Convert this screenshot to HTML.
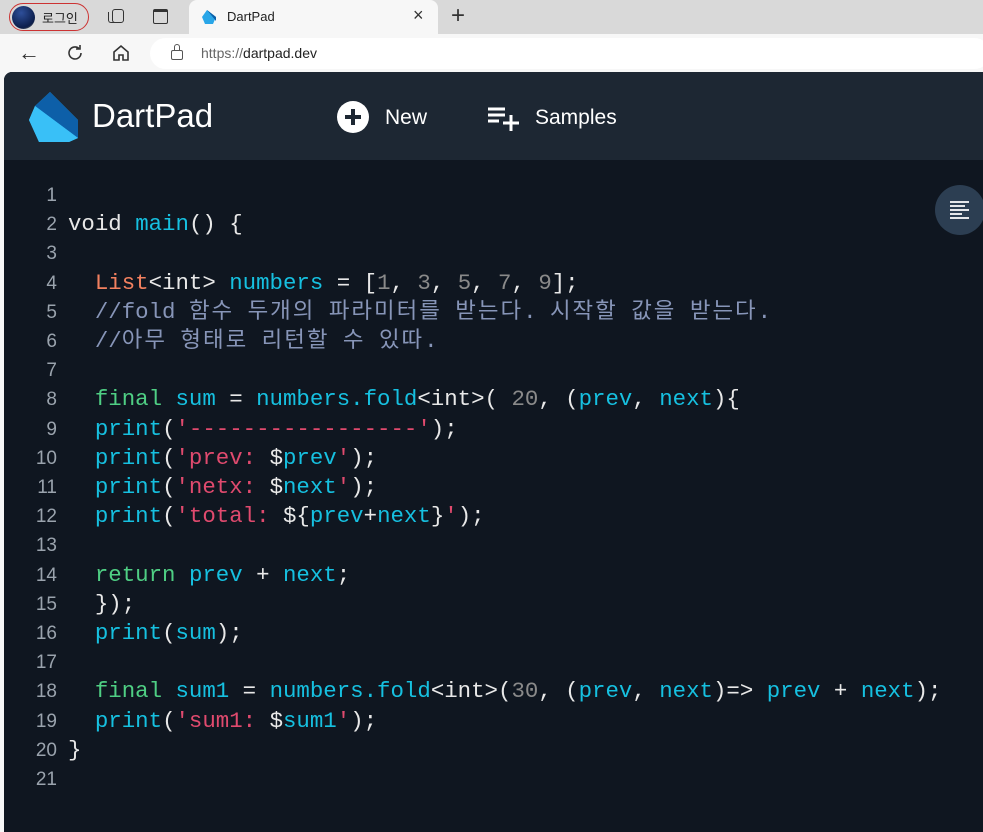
<!DOCTYPE html>
<html><head><meta charset="utf-8"><style>
*{margin:0;padding:0;box-sizing:border-box}
body{width:983px;height:812px;overflow:hidden;background:#f7f7f7;font-family:"Liberation Sans","Noto Sans CJK KR",sans-serif;position:relative}
.tabbar{position:absolute;left:0;top:0;width:983px;height:34px;background:#d9d9d9}
.tab{position:absolute;left:189px;top:0;width:249px;height:34px;background:#f7f7f7;border-radius:8px 8px 0 0}
.addr{position:absolute;left:150px;top:38px;width:840px;height:31px;background:#fff;border-radius:16px}
.page{position:absolute;left:4px;top:72px;width:990px;height:760px;background:#0f1620;border-radius:8px 0 0 0;overflow:hidden}
.hdr{position:absolute;left:0;top:0;width:100%;height:88px;background:#1d2733}
.code{position:absolute;left:0;top:109px;font-family:"Liberation Mono","Noto Sans CJK KR",monospace;font-size:22.4px;line-height:29.2px;color:#e8e8e8;white-space:pre}
.ln{position:absolute;left:0;width:53px;text-align:right;color:#9aa3ad;font-family:"Liberation Sans",sans-serif;font-size:19px}
.tx{position:absolute;left:64px}
.k{letter-spacing:2px}
.c{color:#16c0e0}.o{color:#f2805f}.cm{color:#8795b8}.g{color:#4fcf84}.s{color:#e04a6e}.n{color:#8a8a8a}
</style></head><body>
<div class="tabbar">
 <div style="position:absolute;left:9px;top:3px;width:80px;height:28px;border:1.5px solid #c33;border-radius:14px"></div>
 <div style="position:absolute;left:12px;top:6px;width:23px;height:23px;border-radius:50%;background:radial-gradient(circle at 40% 30%,#2e4f9a,#0b1d4a 70%,#a9a27a)"></div>
 <div style="position:absolute;left:42px;top:8px;font-size:13px;color:#222">로그인</div>
 <div style="position:absolute;left:112px;top:9px;width:12px;height:14px;border:1.6px solid #333;border-radius:3px"></div>
 <div style="position:absolute;left:108px;top:12px;width:9px;height:11px;border-left:1.6px solid #333;border-bottom:1.6px solid #333;border-radius:0 0 0 3px"></div>
 <div style="position:absolute;left:153px;top:9px;width:15px;height:15px;border:1.6px solid #333;border-radius:2px;border-top-width:3px"></div>
 <div class="tab">
  <svg style="position:absolute;left:11px;top:9px" width="18" height="16" viewBox="0 0 18 16"><path d="M2 8 L7 1 L16 8 L13 15 L5 15Z" fill="#29a6e8"/><path d="M7 1 L16 8 L16 12Z" fill="#0a5fa8"/></svg>
  <div style="position:absolute;left:38px;top:9px;font-size:13px;color:#222">DartPad</div>
  <div style="position:absolute;left:224px;top:5px;font-size:18px;color:#333">×</div>
 </div>
 <div style="position:absolute;left:451px;top:2px;font-size:24px;color:#333;font-weight:300">+</div>
</div>
<div style="position:absolute;left:18px;top:40px;font-size:22px;color:#333">←</div>
<svg style="position:absolute;left:65px;top:43px" width="20" height="20" viewBox="0 0 20 20"><path d="M16 10a6 6 0 1 1-2-4.5" fill="none" stroke="#333" stroke-width="1.6"/><path d="M15 2v4h-4" fill="none" stroke="#333" stroke-width="1.6"/></svg>
<svg style="position:absolute;left:111px;top:43px" width="20" height="20" viewBox="0 0 20 20"><path d="M3 9L10 3l7 6v8h-5v-5H8v5H3z" fill="none" stroke="#333" stroke-width="1.6"/></svg>
<div class="addr">
 <div style="position:absolute;left:21px;top:12px;width:12px;height:10px;border:1.4px solid #555;border-radius:2px"></div>
 <div style="position:absolute;left:24px;top:6px;width:6px;height:7px;border:1.4px solid #555;border-bottom:none;border-radius:4px 4px 0 0"></div>
 <div style="position:absolute;left:51px;top:7px;font-size:14px;color:#666">https://<span style="color:#222">dartpad.dev</span></div>
</div>
<div class="page">
 <div class="hdr">
  <svg style="position:absolute;left:25px;top:20px" width="52" height="52" viewBox="0 0 52 52"><path d="M6 14 L21 0 L49 28 L49 46 L40 50 L10 50 L0 28Z" fill="#2db4f5"/><path d="M6 14 L21 0 L49 28 L49 46Z" fill="#0d5fa8"/><path d="M6 14 L49 46 L40 50 L10 50 L0 28Z" fill="#39c0f7"/></svg>
  <div style="position:absolute;left:88px;top:25px;font-size:33px;color:#fff">DartPad</div>
  <div style="position:absolute;left:333px;top:29px;width:32px;height:32px;border-radius:50%;background:#fff"></div>
  <div style="position:absolute;left:341px;top:43px;width:16px;height:4px;background:#1d2733"></div>
  <div style="position:absolute;left:347px;top:37px;width:4px;height:16px;background:#1d2733"></div>
  <div style="position:absolute;left:381px;top:34px;font-size:21px;color:#fff">New</div>
  <svg style="position:absolute;left:484px;top:35px" width="34" height="24" viewBox="0 0 34 24"><path d="M0 2h17M0 8h17M0 14h11M23 8v16M15 16h16" stroke="#fff" stroke-width="3"/></svg>
  <div style="position:absolute;left:531px;top:34px;font-size:21px;color:#fff">Samples</div>
 </div>
 <div style="position:absolute;left:931px;top:113px;width:50px;height:50px;border-radius:50%;background:#2c3e52"></div>
 <svg style="position:absolute;left:946px;top:128px" width="20" height="20" viewBox="0 0 20 20"><path d="M0 2h19M0 6h15M0 10h19M0 14h12M0 18h19" stroke="#fff" stroke-width="1.8"/></svg>
 <div class="code">
<div class="ln" style="top:0">1</div>
<div class="ln" style="top:29.2px">2</div><div class="tx" style="top:29.2px">void <span class="c">main</span>() {</div>
<div class="ln" style="top:58.4px">3</div>
<div class="ln" style="top:87.6px">4</div><div class="tx" style="top:87.6px">  <span class="o">List</span>&lt;int&gt; <span class="c">numbers</span> = [<span class="n">1</span>, <span class="n">3</span>, <span class="n">5</span>, <span class="n">7</span>, <span class="n">9</span>];</div>
<div class="ln" style="top:116.8px">5</div><div class="tx cm" style="top:116.8px">  //fold <span class="k">함수</span> <span class="k">두개의</span> <span class="k">파라미터를</span> <span class="k">받는다</span>. <span class="k">시작할</span> <span class="k">값을</span> <span class="k">받는다</span>.</div>
<div class="ln" style="top:146px">6</div><div class="tx cm" style="top:146px">  //<span class="k">아무</span> <span class="k">형태로</span> <span class="k">리턴할</span> <span class="k">수</span> <span class="k">있따</span>.</div>
<div class="ln" style="top:175.2px">7</div>
<div class="ln" style="top:204.4px">8</div><div class="tx" style="top:204.4px">  <span class="g">final</span> <span class="c">sum</span> = <span class="c">numbers.fold</span>&lt;int&gt;( <span class="n">20</span>, (<span class="c">prev</span>, <span class="c">next</span>){</div>
<div class="ln" style="top:233.6px">9</div><div class="tx" style="top:233.6px">  <span class="c">print</span>(<span class="s">'-----------------'</span>);</div>
<div class="ln" style="top:262.8px">10</div><div class="tx" style="top:262.8px">  <span class="c">print</span>(<span class="s">'prev: </span>$<span class="c">prev</span><span class="s">'</span>);</div>
<div class="ln" style="top:292px">11</div><div class="tx" style="top:292px">  <span class="c">print</span>(<span class="s">'netx: </span>$<span class="c">next</span><span class="s">'</span>);</div>
<div class="ln" style="top:321.2px">12</div><div class="tx" style="top:321.2px">  <span class="c">print</span>(<span class="s">'total: </span>${<span class="c">prev</span>+<span class="c">next</span>}<span class="s">'</span>);</div>
<div class="ln" style="top:350.4px">13</div>
<div class="ln" style="top:379.6px">14</div><div class="tx" style="top:379.6px">  <span class="g">return</span> <span class="c">prev</span> + <span class="c">next</span>;</div>
<div class="ln" style="top:408.8px">15</div><div class="tx" style="top:408.8px">  });</div>
<div class="ln" style="top:438px">16</div><div class="tx" style="top:438px">  <span class="c">print</span>(<span class="c">sum</span>);</div>
<div class="ln" style="top:467.2px">17</div>
<div class="ln" style="top:496.4px">18</div><div class="tx" style="top:496.4px">  <span class="g">final</span> <span class="c">sum1</span> = <span class="c">numbers.fold</span>&lt;int&gt;(<span class="n">30</span>, (<span class="c">prev</span>, <span class="c">next</span>)=&gt; <span class="c">prev</span> + <span class="c">next</span>);</div>
<div class="ln" style="top:525.6px">19</div><div class="tx" style="top:525.6px">  <span class="c">print</span>(<span class="s">'sum1: </span>$<span class="c">sum1</span><span class="s">'</span>);</div>
<div class="ln" style="top:554.8px">20</div><div class="tx" style="top:554.8px">}</div>
<div class="ln" style="top:584px">21</div>
 </div>
</div>
</body></html>
